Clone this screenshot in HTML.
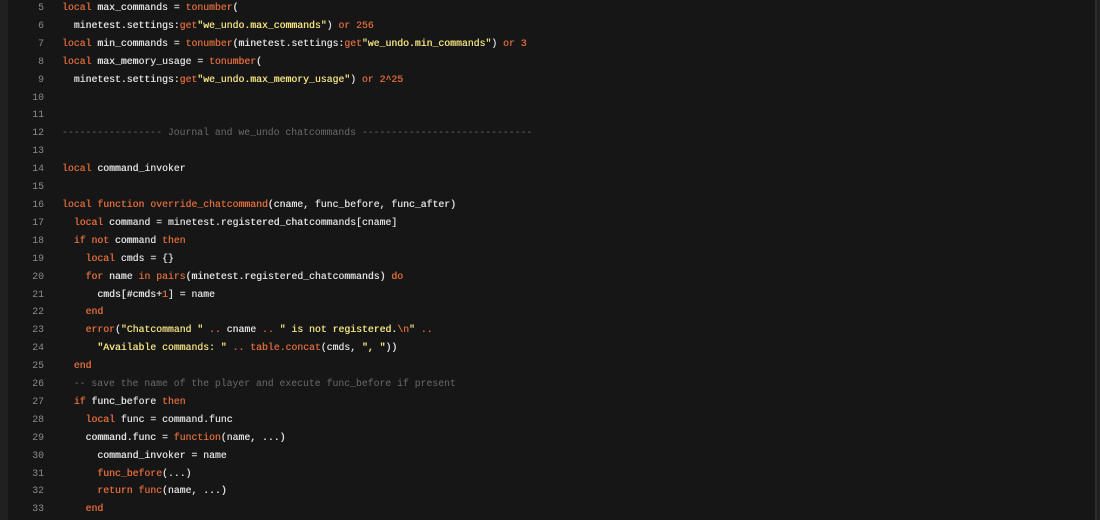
<!DOCTYPE html>
<html><head><style>
html,body{margin:0;padding:0;background:#161616;width:1100px;height:520px;overflow:hidden}
.l{position:absolute;left:0;top:0;width:8px;height:520px;background:#202020}
.r{position:absolute;left:1095px;top:0;width:2px;height:520px;background:#2c2c2c}
.r2{position:absolute;left:1097px;top:0;width:3px;height:520px;background:#1f1f1f}
pre{margin:0;position:absolute;top:-1px;font-family:"Liberation Mono",monospace;font-size:9.8px;line-height:17.9px;color:#dedede;text-shadow:0.3px 0 0 currentColor}
.n{left:14px;width:30px;text-align:right;color:#8a8a8a;text-shadow:none}
.c{left:62px}
.k{color:#dc6a3a}.s{color:#f0e080}.m{color:#6a6a6a;text-shadow:none}
</style></head><body>
<div class="l"></div><div class="r"></div><div class="r2"></div>
<pre class="n">5
6
7
8
9
10
11
12
13
14
15
16
17
18
19
20
21
22
23
24
25
26
27
28
29
30
31
32
33</pre>
<pre class="c"><span class="k">local</span> max_commands = <span class="k">tonumber</span>(
  minetest.settings:<span class="k">get</span><span class="s">"we_undo.max_commands"</span>) <span class="k">or</span> <span class="k">256</span>
<span class="k">local</span> min_commands = <span class="k">tonumber</span>(minetest.settings:<span class="k">get</span><span class="s">"we_undo.min_commands"</span>) <span class="k">or</span> <span class="k">3</span>
<span class="k">local</span> max_memory_usage = <span class="k">tonumber</span>(
  minetest.settings:<span class="k">get</span><span class="s">"we_undo.max_memory_usage"</span>) <span class="k">or</span> <span class="k">2^25</span>


<span class="m">----------------- Journal and we_undo chatcommands -----------------------------</span>

<span class="k">local</span> command_invoker

<span class="k">local function</span> <span class="k">override_chatcommand</span>(cname, func_before, func_after)
  <span class="k">local</span> command = minetest.registered_chatcommands[cname]
  <span class="k">if not</span> command <span class="k">then</span>
    <span class="k">local</span> cmds = {}
    <span class="k">for</span> name <span class="k">in</span> <span class="k">pairs</span>(minetest.registered_chatcommands) <span class="k">do</span>
      cmds[#cmds+<span class="k">1</span>] = name
    <span class="k">end</span>
    <span class="k">error</span>(<span class="s">"Chatcommand "</span> <span class="k">..</span> cname <span class="k">..</span> <span class="s">" is not registered.</span><span class="k">\n</span><span class="s">"</span> <span class="k">..</span>
      <span class="s">"Available commands: "</span> <span class="k">..</span> <span class="k">table.concat</span>(cmds, <span class="s">", "</span>))
  <span class="k">end</span>
  <span class="m">-- save the name of the player and execute func_before if present</span>
  <span class="k">if</span> func_before <span class="k">then</span>
    <span class="k">local</span> func = command.func
    command.func = <span class="k">function</span>(name, ...)
      command_invoker = name
      <span class="k">func_before</span>(...)
      <span class="k">return</span> <span class="k">func</span>(name, ...)
    <span class="k">end</span></pre>
</body></html>
